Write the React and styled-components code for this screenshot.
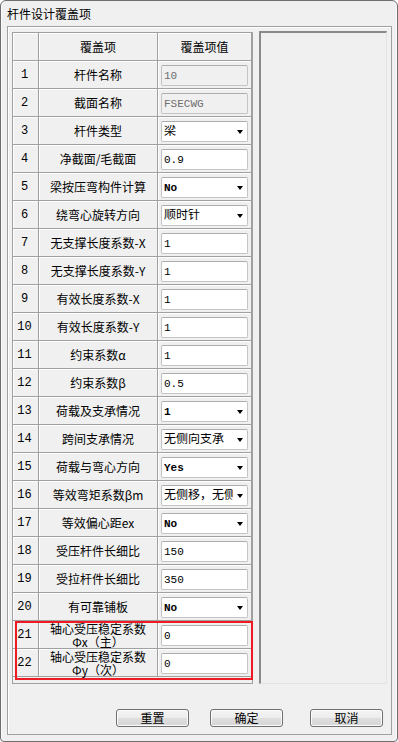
import React from "react";
import styled, { createGlobalStyle } from "styled-components";

const GlobalStyle = createGlobalStyle`
  html, body { margin: 0; padding: 0; background: #ffffff; }
  body {
    font-family: "Noto Sans CJK SC", "Liberation Sans", sans-serif;
    font-size: 12px;
    color: #000;
  }
  * { box-sizing: border-box; }
`;

const Window = styled.div`
  width: 398px;
  height: 742px;
  background: #f0f0f0;
  border: 1px solid #6e6e6e;
  border-radius: 6px 6px 4px 4px;
  padding: 0 5px 6px 6px;
  display: flex;
  flex-direction: column;
  box-shadow: inset 1px 0 0 #fafafa, inset -1px 0 0 #fafafa;
`;

const TitleBar = styled.div`
  height: 25px;
  padding-top: 5px;
  font-size: 12px;
  line-height: 16px;
  color: #000;
  white-space: nowrap;
`;

const Client = styled.div`
  flex: 1;
  border: 1px solid #a0a0a0;
  box-shadow: inset 1px 1px 0 #ffffff;
  padding: 5px 4px 7px 4px;
  display: flex;
  flex-direction: column;
`;

const Main = styled.div`
  display: flex;
  gap: 6px;
  height: 652px;
`;

const TableFrame = styled.div`
  position: relative;
  width: 241px;
  height: 652px;
  border: 1px solid #a0a0a0;
  background: #f0f0f0;
`;

const Row = styled.div`
  display: grid;
  grid-template-columns: 26px 119px 94px;
  height: 28px;
`;

const Cell = styled.div`
  border-right: 1px solid #a0a0a0;
  border-bottom: 1px solid #a0a0a0;
  box-shadow: inset 1px 1px 0 #ffffff;
  display: flex;
  align-items: center;
  justify-content: center;
  text-align: center;
  font-size: 12px;
  line-height: 14px;
  overflow: hidden;
`;

const NumCell = styled(Cell)`
  font-family: "Liberation Mono", monospace;
  font-size: 12px;
  padding-right: 2px;
`;

const LabelCell = styled(Cell)`
  flex-direction: column;
  white-space: nowrap;
  line-height: 13px;
  overflow: visible;
`;

const LabelLine = styled.span`
  display: block;
  height: 13px;
  line-height: 13px;
`;

const ValueCell = styled(Cell)`
  justify-content: flex-start;
  text-align: left;
  padding: 2px 0 0 3px;
`;

const Field = styled.div`
  width: 87px;
  height: 21px;
  border: 1px solid #c4c4c4;
  border-top-color: #abadb3;
  border-radius: 2px;
  background: ${(p) => (p.$disabled ? "#f0f0f0" : "#ffffff")};
  color: ${(p) => (p.$disabled ? "#6d6d6d" : "#000000")};
  display: flex;
  align-items: center;
  padding-left: 2px;
  overflow: hidden;
  white-space: nowrap;
  text-align: left;
  font-family: "Liberation Mono", "Noto Sans CJK SC", monospace;
  font-size: ${(p) => (p.$cjk ? "12px" : "11px")};
  font-weight: ${(p) => (p.$bold ? 700 : 400)};
  line-height: 14px;
`;

const FieldText = styled.span`
  flex: 1;
  overflow: hidden;
  text-align: left;
`;

const ArrowBox = styled.div`
  width: 14px;
  height: 100%;
  flex: none;
  background: #ffffff;
  display: flex;
  align-items: center;
  justify-content: center;
`;

const Arrow = styled.div`
  width: 0;
  height: 0;
  border-left: 3.5px solid transparent;
  border-right: 3.5px solid transparent;
  border-top: 4px solid #000;
  margin-top: 1px;
`;

const Highlight = styled.div`
  position: absolute;
  left: 2px;
  top: 588px;
  width: 238px;
  height: 59px;
  border: 2px solid #ed1c24;
  pointer-events: none;
`;

const Panel = styled.div`
  width: 128px;
  height: 653px;
  margin-top: -1px;
  border-top: 2px solid #8a8a8a;
  border-left: 2px solid #8a8a8a;
  border-right: 1px solid #e4e4e4;
  border-bottom: 1px solid #e4e4e4;
  background: #f0f0f0;
`;

const ButtonRow = styled.div`
  display: flex;
  margin-top: 25px;
  height: 18px;
  padding-left: 104px;
`;

const Button = styled.div`
  width: 73px;
  height: 18px;
  flex: none;
  margin-left: ${(p) => p.$offset || 0}px;
  border: 1px solid #707070;
  border-radius: 3px;
  background: linear-gradient(#f4f4f4 0%, #ececec 50%, #dedede 51%, #d6d6d6 100%);
  box-shadow: inset 0 0 0 1px #fbfbfb;
  display: flex;
  align-items: center;
  justify-content: center;
  font-size: 12px;
  line-height: 14px;
`;

const rows = [
  { n: 1, label: "杆件名称", type: "disabled", value: "10" },
  { n: 2, label: "截面名称", type: "disabled", value: "FSECWG" },
  { n: 3, label: "杆件类型", type: "select", value: "梁" },
  { n: 4, label: "净截面/毛截面", type: "input", value: "0.9" },
  { n: 5, label: "梁按压弯构件计算", type: "select", value: "No" },
  { n: 6, label: "绕弯心旋转方向", type: "select", value: "顺时针" },
  { n: 7, label: "无支撑长度系数-X", type: "input", value: "1" },
  { n: 8, label: "无支撑长度系数-Y", type: "input", value: "1" },
  { n: 9, label: "有效长度系数-X", type: "input", value: "1" },
  { n: 10, label: "有效长度系数-Y", type: "input", value: "1" },
  { n: 11, label: "约束系数α", type: "input", value: "1" },
  { n: 12, label: "约束系数β", type: "input", value: "0.5" },
  { n: 13, label: "荷载及支承情况", type: "select", value: "1" },
  { n: 14, label: "跨间支承情况", type: "select", value: "无侧向支承" },
  { n: 15, label: "荷载与弯心方向", type: "select", value: "Yes" },
  { n: 16, label: "等效弯矩系数βm", type: "select", value: "无侧移，无侧移" },
  { n: 17, label: "等效偏心距ex", type: "select", value: "No" },
  { n: 18, label: "受压杆件长细比", type: "input", value: "150" },
  { n: 19, label: "受拉杆件长细比", type: "input", value: "350" },
  { n: 20, label: "有可靠铺板", type: "select", value: "No" },
  { n: 21, label: ["轴心受压稳定系数", "Φx（主）"], type: "input", value: "0" },
  { n: 22, label: ["轴心受压稳定系数", "Φy（次）"], type: "input", value: "0" },
];

const isCjk = (s) => /[\u3000-\u9fff\uff00-\uffef]/.test(s);

function Value({ type, value }) {
  const cjk = isCjk(value);
  if (type === "select") {
    return (
      <Field $cjk={cjk} $bold={!cjk}>
        <FieldText>{value}</FieldText>
        <ArrowBox>
          <Arrow />
        </ArrowBox>
      </Field>
    );
  }
  return (
    <Field $cjk={cjk} $disabled={type === "disabled"}>
      <FieldText>{value}</FieldText>
    </Field>
  );
}

export default function App() {
  return (
    <>
      <GlobalStyle />
      <Window>
        <TitleBar>杆件设计覆盖项</TitleBar>
        <Client>
          <Main>
            <TableFrame>
              <Row>
                <Cell />
                <Cell>覆盖项</Cell>
                <Cell>覆盖项值</Cell>
              </Row>
              {rows.map((r) => (
                <Row key={r.n}>
                  <NumCell>{r.n}</NumCell>
                  <LabelCell>
                    {Array.isArray(r.label)
                      ? r.label.map((l) => <LabelLine key={l}>{l}</LabelLine>)
                      : r.label}
                  </LabelCell>
                  <ValueCell>
                    <Value type={r.type} value={r.value} />
                  </ValueCell>
                </Row>
              ))}
              <Highlight />
            </TableFrame>
            <Panel />
          </Main>
          <ButtonRow>
            <Button>重置</Button>
            <Button $offset={21}>确定</Button>
            <Button $offset={27}>取消</Button>
          </ButtonRow>
        </Client>
      </Window>
    </>
  );
}
